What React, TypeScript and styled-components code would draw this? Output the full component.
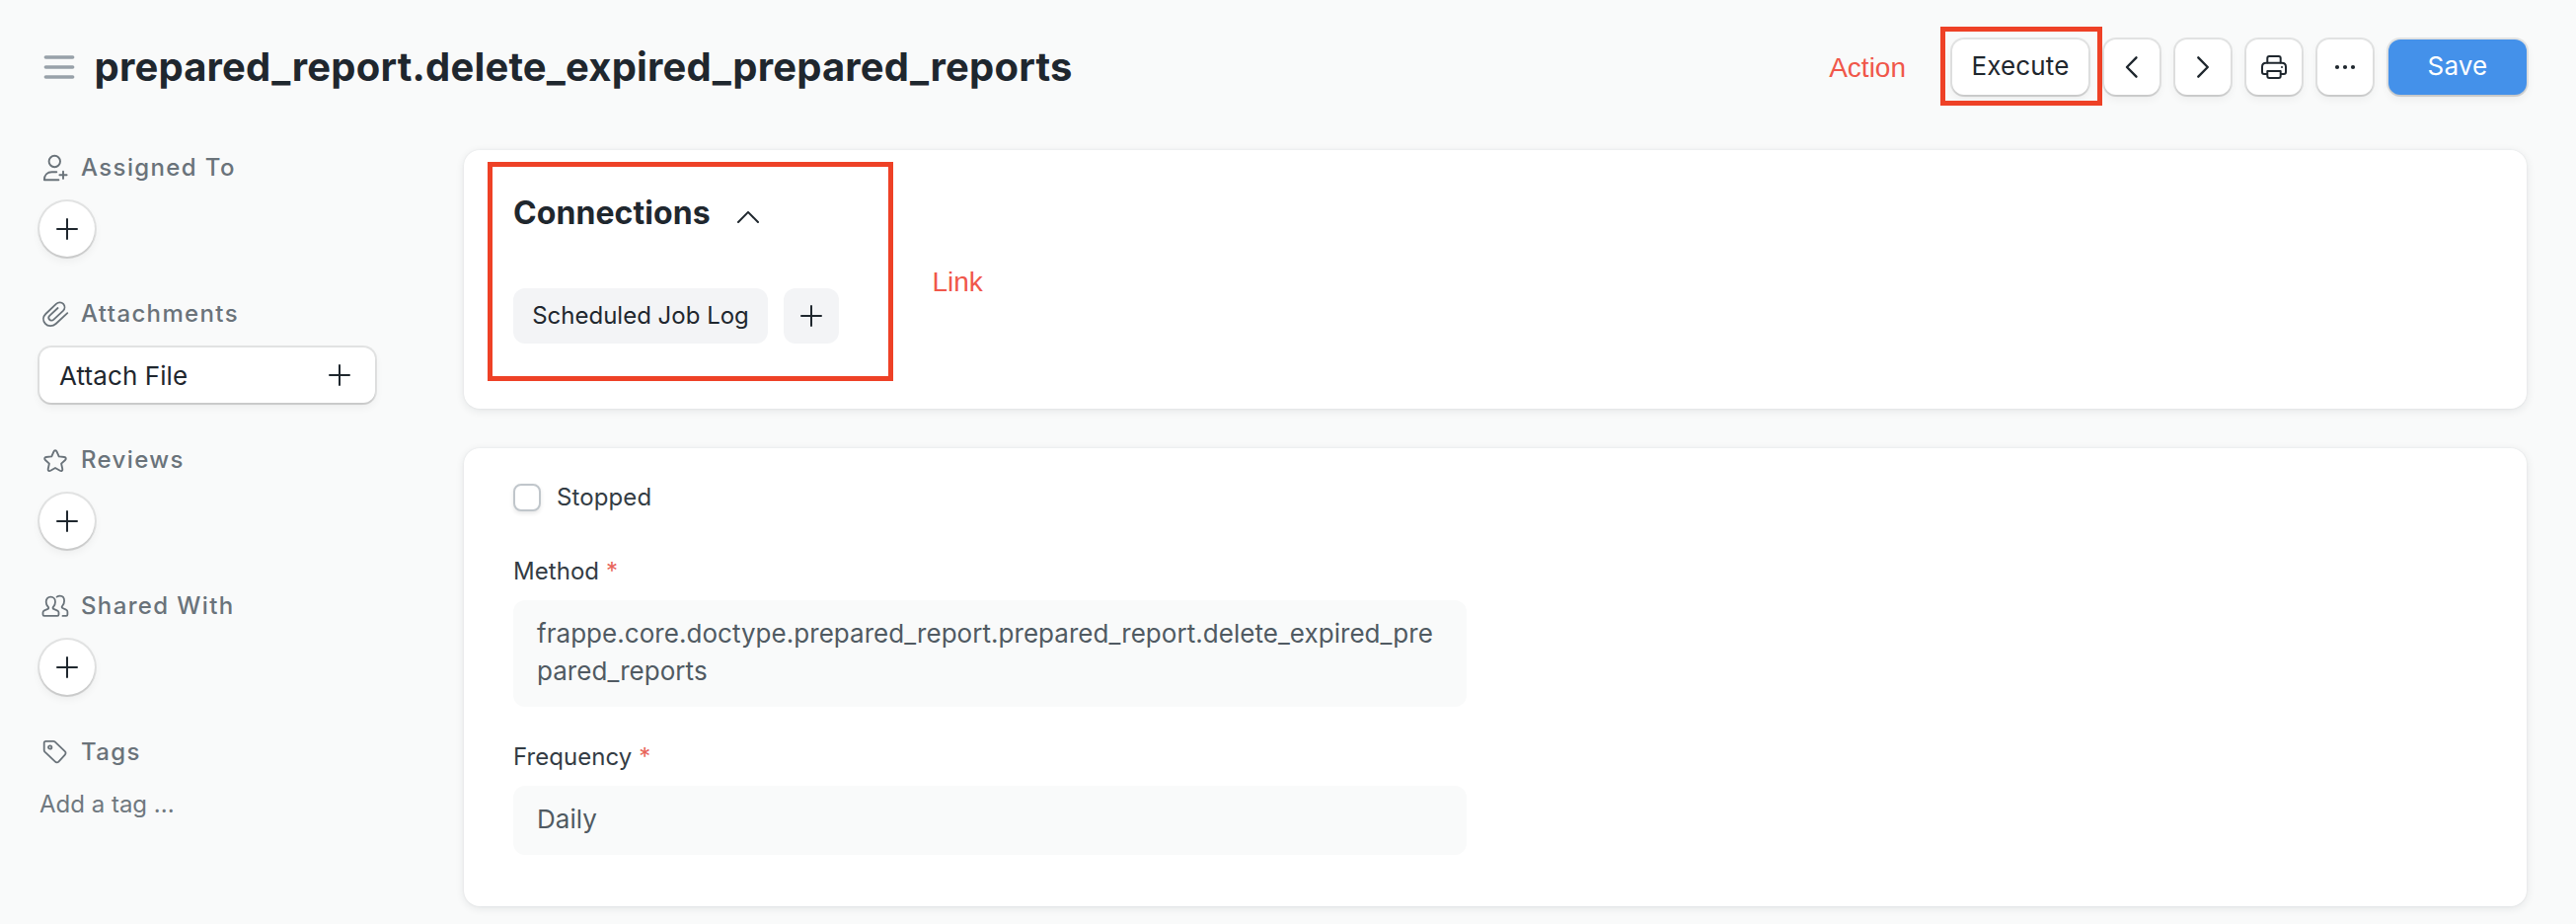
import React from "react";
import styled, { createGlobalStyle } from "styled-components";

const GlobalStyle = createGlobalStyle`
  *, *::before, *::after { box-sizing: border-box; }
  body {
    margin: 0;
    background: #f9fafa;
    color: #1f272e;
    font-family: Inter, "Liberation Sans", sans-serif;
    font-size: 26px;
  }
  button { font: inherit; color: inherit; border: 0; cursor: pointer; }
`;

const elevated = `
  box-shadow: 0 0 0 2px rgba(0, 0, 0, 0.085), 0 2px 1px rgba(0, 0, 0, 0.08), 0 4px 10px rgba(0, 0, 0, 0.06);
`;

const Page = styled.div`
  width: 2610px;
  height: 936px;
  overflow: hidden;
  padding: 40px 50px 0 40px;
`;

const Header = styled.header`
  display: flex;
  align-items: center;
  height: 56px;
  padding-left: 4px;
`;

const Title = styled.h1`
  margin: 0 auto 0 19.5px;
  padding-bottom: 1px;
  font-size: 40px;
  line-height: 56px;
  font-weight: 700;
  letter-spacing: 0.18px;
  white-space: nowrap;
`;

const Actions = styled.div`
  display: flex;
  gap: 16px;
`;

const Note = styled.span`
  font-family: "Liberation Sans", Arial, sans-serif;
  font-size: 28px;
  line-height: 32px;
  color: #f0574a;
`;

const ActionNote = styled(Note)`
  margin: 1px 47px 0 0;
`;

const Button = styled.button<{ $width: number; $primary?: boolean }>`
  display: flex;
  align-items: center;
  justify-content: center;
  width: ${(p) => p.$width}px;
  height: 56px;
  padding: 0 0 3px;
  border-radius: 12px;
  letter-spacing: 0.15px;
  background: ${(p) => (p.$primary ? "#4491ea" : "#fff")};
  color: ${(p) => (p.$primary ? "#fff" : "#1f272e")};
  ${elevated}
`;

const IconButton = styled(Button)`
  padding: 0;
`;

const Highlighted = styled.div`
  position: relative;
`;

const Highlight = styled.span<{ $inset: string }>`
  position: absolute;
  inset: ${(p) => p.$inset};
  border: 5px solid #ee4126;
  pointer-events: none;
  z-index: 1;
`;

const Body = styled.div`
  display: flex;
  gap: 90px;
  margin-top: 56px;
`;

const Sidebar = styled.aside`
  width: 340px;
  padding-top: 3px;
  display: flex;
  flex-direction: column;
  gap: 43px;
`;

const Section = styled.section<{ $gap?: number }>`
  display: flex;
  flex-direction: column;
  align-items: flex-start;
  gap: ${(p) => p.$gap ?? 21}px;
`;

const SectionTitle = styled.h2`
  display: flex;
  gap: 12px;
  height: 28px;
  margin: 0;
  padding-left: 2px;
  font-size: 24px;
  line-height: 29px;
  font-weight: 500;
  letter-spacing: 1.37px;
  color: #6a737a;

  svg { margin-top: 1px; }
`;

const RoundButton = styled.button`
  display: flex;
  align-items: center;
  justify-content: center;
  width: 56px;
  height: 56px;
  padding: 0;
  border-radius: 50%;
  background: #fff;
  ${elevated}
`;

const AttachButton = styled.button`
  display: flex;
  align-items: center;
  justify-content: space-between;
  width: 100%;
  height: 56px;
  padding: 0 25px 0 20px;
  border-radius: 12px;
  letter-spacing: 0.1px;
  background: #fff;
  ${elevated}
`;

const TagInput = styled.div`
  font-size: 24px;
  line-height: 28px;
  color: #6f787f;
`;

const Main = styled.main`
  flex: 1;
  display: flex;
  flex-direction: column;
  gap: 40px;
`;

const Card = styled.section<{ $height: number }>`
  height: ${(p) => p.$height}px;
  padding: 0 50px;
  border-radius: 16px;
  background: #fff;
  box-shadow: 0 0 2px rgba(25, 39, 52, 0.08), 0 2px 8px rgba(25, 39, 52, 0.1);
`;

const LinksCard = styled(Card)`
  display: flex;
  align-items: flex-start;
`;

const FormCard = styled(Card)`
  padding-top: 36px;
`;

const Connections = styled.div`
  position: relative;
  width: 424.5px;
  padding-top: 44px;
`;

const ConnectionsTitle = styled.h3`
  display: flex;
  align-items: center;
  gap: 24px;
  margin: 0;
  font-size: 32px;
  line-height: 40px;
  font-weight: 700;
  letter-spacing: 0.08px;
`;

const Chips = styled.div`
  display: flex;
  gap: 16px;
  margin-top: 56px;
`;

const Chip = styled.button<{ $width: number }>`
  display: flex;
  align-items: center;
  justify-content: center;
  width: ${(p) => p.$width}px;
  height: 56px;
  padding: 0 0 1px;
  border-radius: 12px;
  background: #f3f4f6;
  font-size: 24px;
`;

const PlusChip = styled(Chip)`
  padding: 0;
`;

const LinkNote = styled(Note)`
  margin-top: 118px;
`;

const CheckRow = styled.label`
  display: flex;
  align-items: center;
  gap: 16px;
  height: 28px;
  margin-bottom: 47px;
  font-size: 24px;
  line-height: 28px;
  letter-spacing: 0.1px;
  color: #333c44;
`;

const Checkbox = styled.span`
  width: 28px;
  height: 28px;
  border: 2px solid #c0c6cb;
  border-radius: 8px;
  background: #fff;
  box-shadow: 0 2px 4px rgba(0, 0, 0, 0.1);
`;

const Field = styled.div`
  width: 966px;
  margin-bottom: 37px;
`;

const FieldLabel = styled.div`
  font-size: 24px;
  line-height: 28px;
  letter-spacing: 0.05px;
  color: #333c44;
  margin-bottom: 15px;
`;

const Required = styled.span`
  color: #e8645a;
`;

const FieldValue = styled.div<{ $height: number }>`
  height: ${(p) => p.$height}px;
  padding: 15px 24px;
  border-radius: 12px;
  background: #f9fafa;
  line-height: 38px;
  color: #505a62;
  letter-spacing: 0.04px;
  word-break: break-all;
`;

const Glyph = styled.svg`
  display: block;
  flex: none;
  fill: none;
  stroke: currentColor;
  stroke-linecap: round;
  stroke-linejoin: round;
`;

const PlusIcon = () => (
  <Glyph width="22" height="22" viewBox="0 0 22 22" strokeWidth="2">
    <path d="M11 1V21M1 11H21" />
  </Glyph>
);

const MenuIcon = () => (
  <Glyph width="32" height="28" viewBox="0 0 32 28" strokeWidth="3.6" color="#98a1a9">
    <path d="M2.4 4H29.6M2.4 14H29.6M2.4 24H29.6" />
  </Glyph>
);

const AssignIcon = () => (
  <Glyph width="28" height="28" viewBox="0 0 28 28" strokeWidth="1.9">
    <circle cx="13.3" cy="7.5" r="5.7" />
    <path d="M17.4 26.2H2.9C2.9 21.5 6 18.3 10.5 18.3H15.3M22 17.7V24.9M18.4 21.3H25.6" />
  </Glyph>
);

const ClipIcon = () => (
  <Glyph width="28" height="28" viewBox="0 0 28 28" strokeWidth="1.8">
    <path d="M26.3 13.2L14.6 24C11.5 26.8 6.5 26.9 3.9 23.9C1.2 20.8 1.4 16.8 4.3 14L14.9 3.9C17 1.9 20.3 1.9 22.2 3.9C24.1 6 23.8 9 21.9 10.9L12.2 19.8C11 20.9 9 20.8 8 19.6C7 18.4 7.2 16.7 8.4 15.6L16.6 8" />
  </Glyph>
);

const StarIcon = () => (
  <Glyph width="28" height="28" viewBox="0 -0.9 28 28" strokeWidth="1.9">
    <path d="M14 3.4C14.6 3.4 15.2 3.7 15.5 4.4L17.7 9.5L23.1 10.1C24.8 10.3 25.4 12 24.1 13.1L20.1 16.7L21.3 22.2C21.6 23.8 20.2 24.7 18.8 23.9L14 21.1L9.2 23.9C7.8 24.7 6.4 23.8 6.7 22.2L7.9 16.7L3.9 13.1C2.6 12 3.2 10.3 4.9 10.1L10.3 9.5L12.5 4.4C12.8 3.7 13.4 3.4 14 3.4Z" />
  </Glyph>
);

const SharedIcon = () => (
  <Glyph width="28" height="28" viewBox="0 -2 28 28" strokeWidth="1.8">
    <path d="M9.3 2.7C6.4 2.7 4.7 4.9 4.7 7.7C4.7 9.7 5.5 11.7 6.9 13C7.5 13.6 7.3 14.6 6.5 14.9L3 16.3C2 16.7 1.5 17.5 1.5 18.6V20.6C1.5 21.4 2 21.9 2.8 21.9H16.2C17 21.9 17.5 21.4 17.5 20.6V18.6C17.5 17.5 16.8 16.7 15.8 16.3L12.3 14.9C11.5 14.6 11.3 13.6 11.9 13C13.2 11.7 14 9.7 14 7.7C14 4.9 12.2 2.7 9.3 2.7Z" />
    <path d="M15.6 2.6C16.5 1.9 17.7 1.6 18.8 1.6C21.5 1.6 23.1 3.8 23.1 6.7C23.1 8.8 22.3 10.8 21 12.1C20.4 12.7 20.6 13.7 21.4 14L25 15.6C26 16 26.4 16.8 26.4 17.8V20.6C26.4 21.4 25.9 21.9 25.1 21.9H21.5" />
  </Glyph>
);

const TagIcon = () => (
  <Glyph width="28" height="28" viewBox="0 0 28 28" strokeWidth="1.8">
    <path d="M4.3 2.8H12C12.6 2.8 13.2 3 13.6 3.4L23.8 13.2C24.8 14.1 24.8 15.6 23.8 16.6L17.4 23.6C16.4 24.6 14.9 24.6 14 23.6L3.4 13.6C3 13.2 2.7 12.6 2.7 12V4.4C2.7 3.5 3.4 2.8 4.3 2.8Z" />
    <circle cx="8.7" cy="9" r="1.7" />
  </Glyph>
);

const PreviousIcon = () => (
  <Glyph width="28" height="28" viewBox="0 0 28 28" strokeWidth="2.4">
    <path d="M18.5 4.3L9 14L18.5 23.7" />
  </Glyph>
);

const NextIcon = () => (
  <Glyph width="28" height="28" viewBox="0 0 28 28" strokeWidth="2.4">
    <path d="M9.3 4.3L18.8 14L9.3 23.7" />
  </Glyph>
);

const PrintIcon = () => (
  <Glyph width="28" height="28" viewBox="0 0 28 28" strokeWidth="2">
    <path d="M7.3 9.5V5C7.3 3.9 8.2 3 9.3 3H18.7C19.8 3 20.7 3.9 20.7 5V9.5" />
    <path d="M7 21H4C2.9 21 2 20.1 2 19V13.7C2 11.2 3.7 9.7 6 9.7H22C24.3 9.7 26 11.2 26 13.7V19C26 20.1 25.1 21 24 21H21" />
    <path d="M7.3 18H20.7V23C20.7 24.1 19.8 25 18.7 25H9.3C8.2 25 7.3 24.1 7.3 23Z" />
    <circle cx="22" cy="14" r="1" fill="currentColor" stroke="none" />
  </Glyph>
);

const MoreIcon = () => (
  <Glyph width="28" height="28" viewBox="0 0 28 28">
    <g fill="currentColor" stroke="none">
      <circle cx="6" cy="14" r="2.1" />
      <circle cx="14" cy="14" r="2.1" />
      <circle cx="22" cy="14" r="2.1" />
    </g>
  </Glyph>
);

const CollapseIcon = () => (
  <Glyph width="28" height="28" viewBox="0 0 28 28" strokeWidth="2">
    <path d="M4 23L14 12.9L24 23" />
  </Glyph>
);

export default function App() {
  return (
    <Page>
      <GlobalStyle />
      <Header>
        <MenuIcon />
        <Title>prepared_report.delete_expired_prepared_reports</Title>
        <ActionNote>Action</ActionNote>
        <Actions>
          <Highlighted>
            <Button $width={138}>Execute</Button>
            <Highlight $inset="-13px -14px -11px -12px" />
          </Highlighted>
          <IconButton $width={56} aria-label="Previous"><PreviousIcon /></IconButton>
          <IconButton $width={56} aria-label="Next"><NextIcon /></IconButton>
          <IconButton $width={56} aria-label="Print"><PrintIcon /></IconButton>
          <IconButton $width={56} aria-label="More"><MoreIcon /></IconButton>
          <Button $width={140} $primary>Save</Button>
        </Actions>
      </Header>
      <Body>
        <Sidebar>
          <Section>
            <SectionTitle><AssignIcon />Assigned To</SectionTitle>
            <RoundButton aria-label="Assign"><PlusIcon /></RoundButton>
          </Section>
          <Section>
            <SectionTitle><ClipIcon />Attachments</SectionTitle>
            <AttachButton>Attach File<PlusIcon /></AttachButton>
          </Section>
          <Section>
            <SectionTitle><StarIcon />Reviews</SectionTitle>
            <RoundButton aria-label="Add review"><PlusIcon /></RoundButton>
          </Section>
          <Section>
            <SectionTitle><SharedIcon />Shared With</SectionTitle>
            <RoundButton aria-label="Share"><PlusIcon /></RoundButton>
          </Section>
          <Section $gap={26}>
            <SectionTitle><TagIcon />Tags</SectionTitle>
            <TagInput>Add a tag ...</TagInput>
          </Section>
        </Sidebar>
        <Main>
          <LinksCard $height={262}>
            <Connections>
              <ConnectionsTitle>Connections<CollapseIcon /></ConnectionsTitle>
              <Chips>
                <Chip $width={258}>Scheduled Job Log</Chip>
                <PlusChip $width={56} aria-label="New Scheduled Job Log"><PlusIcon /></PlusChip>
              </Chips>
              <Highlight $inset="12px 39.5px -38px -26px" />
            </Connections>
            <LinkNote>Link</LinkNote>
          </LinksCard>
          <FormCard $height={464}>
            <CheckRow><Checkbox />Stopped</CheckRow>
            <Field>
              <FieldLabel>Method <Required>*</Required></FieldLabel>
              <FieldValue $height={108}>
                frappe.core.doctype.prepared_report.prepared_report.delete_expired_prepared_reports
              </FieldValue>
            </Field>
            <Field>
              <FieldLabel>Frequency <Required>*</Required></FieldLabel>
              <FieldValue $height={70}>Daily</FieldValue>
            </Field>
          </FormCard>
        </Main>
      </Body>
    </Page>
  );
}
